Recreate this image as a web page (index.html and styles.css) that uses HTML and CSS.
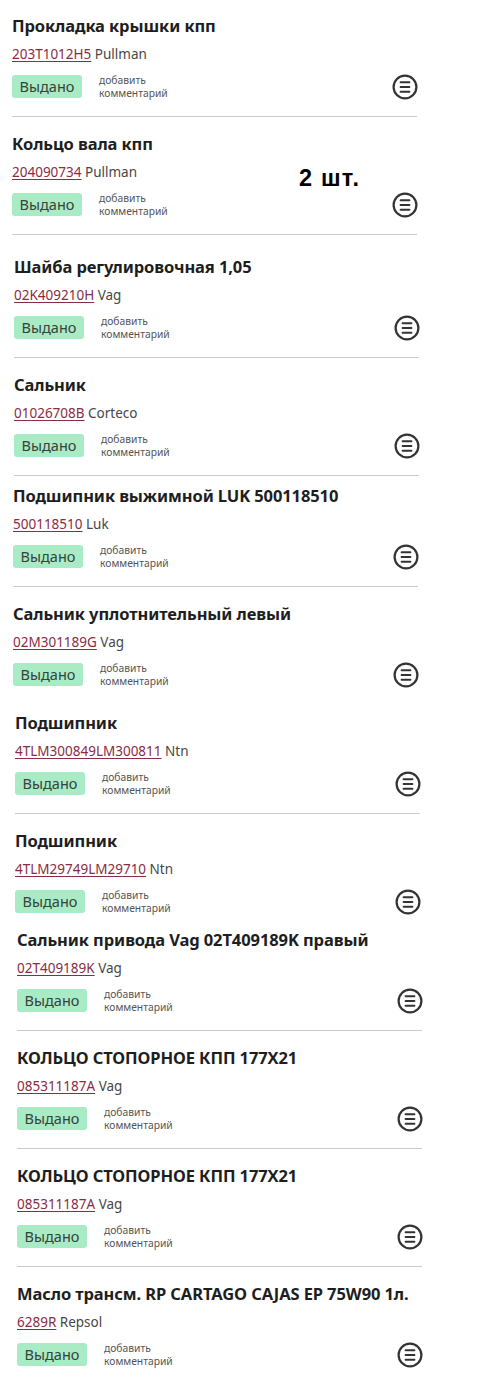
FILE: index.html
```html
<!DOCTYPE html>
<html lang="ru">
<head>
<meta charset="utf-8">
<title>Выдача запчастей</title>
<link rel="stylesheet" href="styles.css">
</head>
<body>
<svg width="0" height="0" class="defs" aria-hidden="true">
  <symbol id="menu-circle" viewBox="0 0 26 26">
    <circle cx="13" cy="13" r="11.4" fill="none" stroke="#333" stroke-width="2.2"/>
    <path d="M8.6 8.2h8.8M8.6 13h8.8M8.6 17.8h8.8" stroke="#333" stroke-width="2" stroke-linecap="round"/>
  </symbol>
</svg>
<main class="list">

  <section class="item item--first">
    <h2 class="title">Прокладка крышки кпп</h2>
    <p class="code"><a href="#" class="article">203T1012H5</a> Pullman</p>
    <div class="actions">
      <span class="badge">Выдано</span>
      <a href="#" class="comment">добавить<br>комментарий</a>
      <button class="menu" type="button"><svg width="26" height="26"><use href="#menu-circle"/></svg></button>
    </div>
  </section>

  <section class="item item--qty">
    <h2 class="title">Кольцо вала кпп</h2>
    <p class="code"><a href="#" class="article">204090734</a> Pullman</p>
    <div class="actions">
      <span class="badge">Выдано</span>
      <a href="#" class="comment">добавить<br>комментарий</a>
      <button class="menu" type="button"><svg width="26" height="26"><use href="#menu-circle"/></svg></button>
    </div>
    <span class="qty">2 шт.</span>
  </section>

  <section class="item item--x14 item--pt21">
    <h2 class="title">Шайба регулировочная 1,05</h2>
    <p class="code"><a href="#" class="article">02K409210H</a> Vag</p>
    <div class="actions">
      <span class="badge">Выдано</span>
      <a href="#" class="comment">добавить<br>комментарий</a>
      <button class="menu" type="button"><svg width="26" height="26"><use href="#menu-circle"/></svg></button>
    </div>
  </section>

  <section class="item item--x14">
    <h2 class="title">Сальник</h2>
    <p class="code"><a href="#" class="article">01026708B</a> Corteco</p>
    <div class="actions">
      <span class="badge">Выдано</span>
      <a href="#" class="comment">добавить<br>комментарий</a>
      <button class="menu" type="button"><svg width="26" height="26"><use href="#menu-circle"/></svg></button>
    </div>
  </section>

  <section class="item item--x13 item--pt9">
    <h2 class="title">Подшипник выжимной LUK 500118510</h2>
    <p class="code"><a href="#" class="article">500118510</a> Luk</p>
    <div class="actions">
      <span class="badge">Выдано</span>
      <a href="#" class="comment">добавить<br>комментарий</a>
      <button class="menu" type="button"><svg width="26" height="26"><use href="#menu-circle"/></svg></button>
    </div>
  </section>

  <section class="item item--x13 item--plain">
    <h2 class="title">Сальник уплотнительный левый</h2>
    <p class="code"><a href="#" class="article">02M301189G</a> Vag</p>
    <div class="actions">
      <span class="badge">Выдано</span>
      <a href="#" class="comment">добавить<br>комментарий</a>
      <button class="menu" type="button"><svg width="26" height="26"><use href="#menu-circle"/></svg></button>
    </div>
  </section>

  <section class="item item--x15 item--pt8">
    <h2 class="title">Подшипник</h2>
    <p class="code"><a href="#" class="article">4TLM300849LM300811</a> Ntn</p>
    <div class="actions">
      <span class="badge">Выдано</span>
      <a href="#" class="comment">добавить<br>комментарий</a>
      <button class="menu" type="button"><svg width="26" height="26"><use href="#menu-circle"/></svg></button>
    </div>
  </section>

  <section class="item item--x15 item--plain item--tight">
    <h2 class="title">Подшипник</h2>
    <p class="code"><a href="#" class="article">4TLM29749LM29710</a> Ntn</p>
    <div class="actions">
      <span class="badge">Выдано</span>
      <a href="#" class="comment">добавить<br>комментарий</a>
      <button class="menu" type="button"><svg width="26" height="26"><use href="#menu-circle"/></svg></button>
    </div>
  </section>

  <section class="item item--x17">
    <h2 class="title">Сальник привода Vag 02T409189K правый</h2>
    <p class="code"><a href="#" class="article">02T409189K</a> Vag</p>
    <div class="actions">
      <span class="badge">Выдано</span>
      <a href="#" class="comment">добавить<br>комментарий</a>
      <button class="menu" type="button"><svg width="26" height="26"><use href="#menu-circle"/></svg></button>
    </div>
  </section>

  <section class="item item--x17">
    <h2 class="title">КОЛЬЦО СТОПОРНОЕ КПП 177Х21</h2>
    <p class="code"><a href="#" class="article">085311187A</a> Vag</p>
    <div class="actions">
      <span class="badge">Выдано</span>
      <a href="#" class="comment">добавить<br>комментарий</a>
      <button class="menu" type="button"><svg width="26" height="26"><use href="#menu-circle"/></svg></button>
    </div>
  </section>

  <section class="item item--x17">
    <h2 class="title">КОЛЬЦО СТОПОРНОЕ КПП 177Х21</h2>
    <p class="code"><a href="#" class="article">085311187A</a> Vag</p>
    <div class="actions">
      <span class="badge">Выдано</span>
      <a href="#" class="comment">добавить<br>комментарий</a>
      <button class="menu" type="button"><svg width="26" height="26"><use href="#menu-circle"/></svg></button>
    </div>
  </section>

  <section class="item item--x17 item--plain">
    <h2 class="title">Масло трансм. RP CARTAGO CAJAS EP 75W90 1л.</h2>
    <p class="code"><a href="#" class="article">6289R</a> Repsol</p>
    <div class="actions">
      <span class="badge">Выдано</span>
      <a href="#" class="comment">добавить<br>комментарий</a>
      <button class="menu" type="button"><svg width="26" height="26"><use href="#menu-circle"/></svg></button>
    </div>
  </section>

</main>
</body>
</html>
```

FILE: styles.css
```css
* { box-sizing: border-box; }

html, body {
  margin: 0;
  padding: 0;
  background: #ffffff;
}

body {
  width: 480px;
  min-height: 1393px;
  font-family: "Noto Sans", "Open Sans", sans-serif;
  color: #222;
}

.defs {
  position: absolute;
  width: 0;
  height: 0;
  overflow: hidden;
}

.list {
  display: flex;
  flex-direction: column;
}

.item {
  position: relative;
  display: flex;
  flex-direction: column;
  width: 405px;
  margin-left: 12px;
  padding: 16px 0 18px;
  border-bottom: 1px solid #cbcbcb;
}

.item--first { padding-top: 15px; }
.item--pt21 { padding-top: 21px; }
.item--pt9 { padding-top: 9px; }
.item--pt8 { padding-top: 8px; }
.item--plain { border-bottom: none; }
.item--tight { padding-bottom: 0; }

.item--x13 { margin-left: 13px; }
.item--x14 { margin-left: 14px; }
.item--x15 { margin-left: 15px; }
.item--x17 { margin-left: 17px; }

.title {
  margin: 0;
  font-size: 16.5px;
  line-height: 22px;
  font-weight: 700;
  color: #1e1e1e;
  white-space: nowrap;
  letter-spacing: -0.1px;
}

.code {
  margin: 7px 0 0;
  font-size: 13.5px;
  line-height: 20px;
  color: #474747;
  white-space: nowrap;
}

.article {
  color: #8a2c43;
  text-decoration: underline;
  text-decoration-thickness: 1px;
  text-underline-offset: 2px;
}

.actions {
  display: flex;
  align-items: center;
  height: 23px;
  margin-top: 11px;
}

.badge {
  display: flex;
  align-items: center;
  justify-content: center;
  width: 70px;
  height: 23px;
  border-radius: 3px;
  background: #a9ebc5;
  color: #36423b;
  font-size: 14.5px;
  line-height: 23px;
}

.comment {
  margin-left: 17px;
  font-size: 10.3px;
  line-height: 12.5px;
  color: #555;
  text-decoration: none;
}

.menu {
  margin-left: auto;
  margin-right: -1px;
  width: 26px;
  height: 26px;
  padding: 0;
  border: none;
  background: none;
  display: flex;
}

.qty {
  position: absolute;
  left: 287px;
  top: 50px;
  font-family: "Liberation Sans", Arial, sans-serif;
  font-weight: 700;
  font-size: 23.5px;
  line-height: 22px;
  color: #000;
  letter-spacing: 1.2px;
}
```
